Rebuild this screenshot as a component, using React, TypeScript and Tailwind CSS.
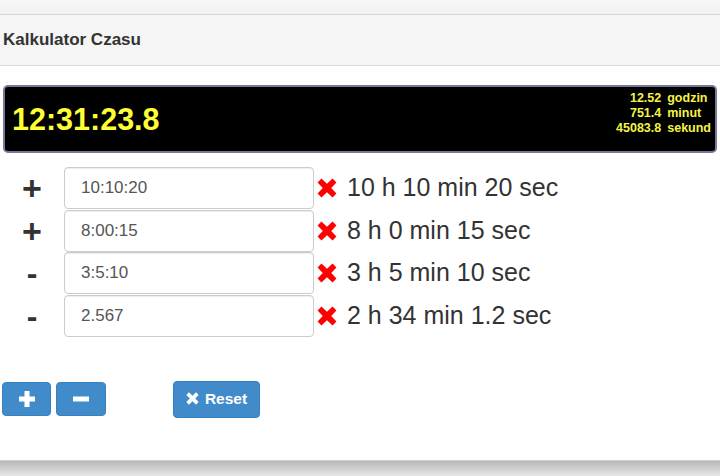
import React from 'react'

interface Row {
  sign: '+' | '-'
  value: string
  label: string
}

const ROWS: Row[] = [
  { sign: '+', value: '10:10:20', label: '10 h 10 min 20 sec' },
  { sign: '+', value: '8:00:15', label: '8 h 0 min 15 sec' },
  { sign: '-', value: '3:5:10', label: '3 h 5 min 10 sec' },
  { sign: '-', value: '2.567', label: '2 h 34 min 1.2 sec' },
]

const TOTALS = [
  { value: '12.52', unit: 'godzin' },
  { value: '751.4', unit: 'minut' },
  { value: '45083.8', unit: 'sekund' },
]

function RemoveIcon({ size = 18, color = '#ff0000' }: { size?: number; color?: string }) {
  return (
    <svg width={size} height={size} viewBox="0 0 18 18">
      <path
        d="M0.5 4 L4 0.5 L9 5.2 L14 0.5 L17.5 4 L12.8 9 L17.5 14 L14 17.5 L9 12.8 L4 17.5 L0.5 14 L5.2 9 Z"
        fill={color}
      />
    </svg>
  )
}

function App() {
  return (
    <div className="w-[720px] h-[476px] overflow-hidden flex flex-col bg-[#f7f7f7] font-['Liberation_Sans',Arial,sans-serif] text-[#333]">
      {/* page strip above the panel */}
      <div className="h-[14px] flex-shrink-0 bg-gradient-to-b from-[#f8f8f8] to-[#f0f0f0]" />

      {/* Panel */}
      <div className="flex-1 flex flex-col bg-white border-t border-[#d6d6d6] border-b border-b-[#cfcfcf]">
        <div className="h-[51px] flex-shrink-0 flex items-center px-[3px] bg-[#f5f5f5] border-b border-[#dddddd]">
          <h1 className="text-[17px] font-bold text-[#333]">Kalkulator Czasu</h1>
        </div>

        {/* Display */}
        <div className="px-[3px] pt-[19px]">
          <div className="h-[68px] flex justify-between bg-black border-2 border-[#7a7898] rounded-[5px]">
            <div className="flex items-center pl-[7px] pt-[1px] text-[30.5px] font-bold text-[#ffff33] leading-none">
              12:31:23.8
            </div>
            <table className="self-start mt-[4px] mr-[4px] text-[12.5px] font-bold text-[#f4f448] leading-[15px]">
              <tbody>
                {TOTALS.map((t) => (
                  <tr key={t.unit}>
                    <td className="text-right pr-[6px]">{t.value}</td>
                    <td className="text-left">{t.unit}</td>
                  </tr>
                ))}
              </tbody>
            </table>
          </div>
        </div>

        {/* Rows */}
        <div className="mt-[14px] flex flex-col gap-[0.5px]">
          {ROWS.map((row, idx) => (
            <div key={idx} className="h-[42px] flex items-center">
              <div
                className={`w-[64px] text-center font-bold text-[#333] leading-none ${
                  row.sign === '+' ? 'text-[34px]' : 'text-[32px]'
                }`}
              >
                {row.sign}
              </div>
              <input
                defaultValue={row.value}
                className="w-[250px] h-[42px] pl-[16px] text-[17px] text-[#555] bg-white border border-[#cccccc] rounded-[4px] shadow-[inset_0_1px_1px_rgba(0,0,0,0.075)] outline-none"
              />
              <span className="ml-[3px] flex items-center">
                <RemoveIcon size={20} />
              </span>
              <span className="ml-[10px] text-[25px] text-[#333] whitespace-nowrap">{row.label}</span>
            </div>
          ))}
        </div>

        {/* Buttons */}
        <div className="mt-[44px] flex items-center pl-[2px]">
          <button className="w-[49px] h-[34px] flex items-center justify-center bg-[#428bca] border border-[#3a80bd] rounded-[4px]">
            <svg width="18" height="18" viewBox="0 0 18 18">
              <path d="M6.5 1 H11.5 V6.5 H17 V11.5 H11.5 V17 H6.5 V11.5 H1 V6.5 H6.5 Z" fill="#fff" />
            </svg>
          </button>
          <button className="ml-[5px] w-[50px] h-[34px] flex items-center justify-center bg-[#428bca] border border-[#3a80bd] rounded-[4px]">
            <svg width="18" height="18" viewBox="0 0 18 18">
              <rect x="1" y="6.5" width="16" height="5" fill="#fff" />
            </svg>
          </button>
          <button className="ml-[67px] w-[87px] h-[37px] flex items-center justify-center gap-[6px] bg-[#428bca] border border-[#3a80bd] rounded-[4px] text-white text-[15.5px] font-bold">
            <span className="-mt-[2px] flex items-center">
              <RemoveIcon size={13} color="#ffffff" />
            </span>
            <span>Reset</span>
          </button>
        </div>
      </div>

      {/* shadow under the panel */}
      <div className="h-[15px] flex-shrink-0 bg-gradient-to-b from-[#b9b9b9] to-[#e6e6e6]" />
    </div>
  )
}

export default App
